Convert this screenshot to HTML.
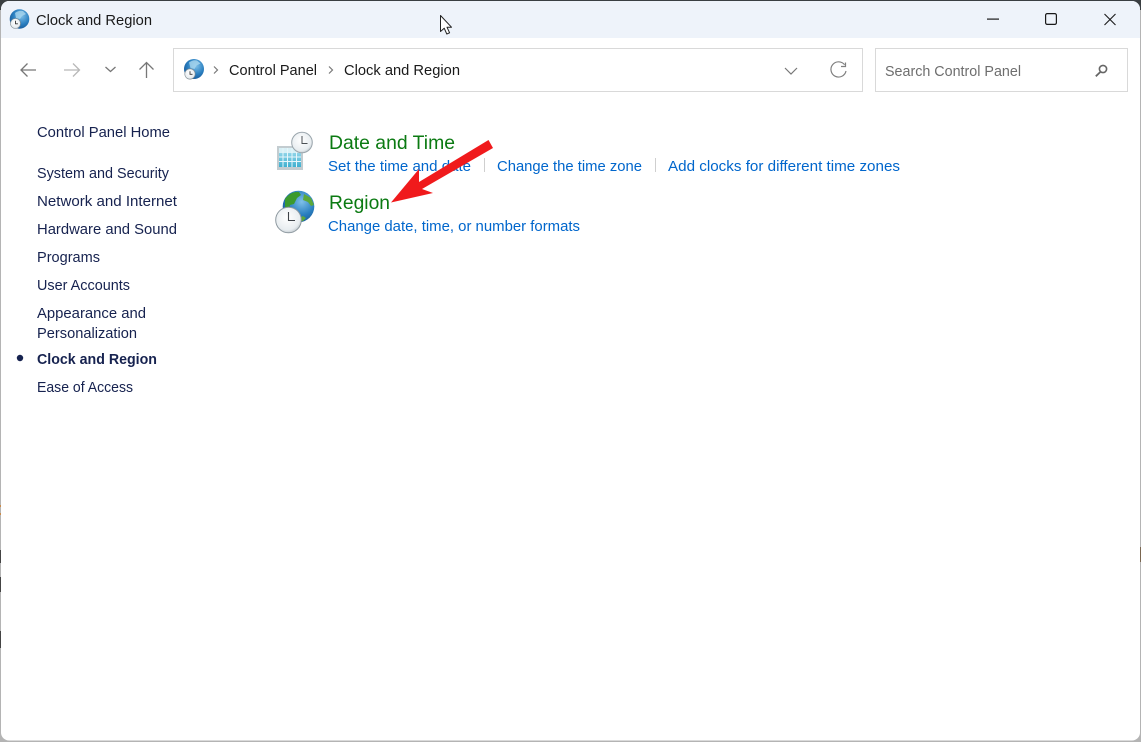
<!DOCTYPE html>
<html>
<head>
<meta charset="utf-8">
<title>Clock and Region</title>
<style>
html,body{margin:0;padding:0;width:1141px;height:742px;overflow:hidden;background:#fff}
svg{display:block}
text{font-family:"Liberation Sans",sans-serif;font-size:14.5px;fill:#1a1a1a}
.nav text{fill:#16224f}
.lnk text{fill:#0066cc}
.head text{fill:#0b7a12;font-size:19.5px}
</style>
</head>
<body>
<svg xmlns="http://www.w3.org/2000/svg" width="1141" height="742" viewBox="0 0 1141 742">
<defs>
<radialGradient id="globe" cx="0.6" cy="0.35" r="0.75">
<stop offset="0" stop-color="#7fc0e8"/><stop offset="0.55" stop-color="#2a7fc0"/><stop offset="1" stop-color="#14508f"/>
</radialGradient>
<radialGradient id="clockface" cx="0.45" cy="0.4" r="0.7">
<stop offset="0" stop-color="#ffffff"/><stop offset="0.7" stop-color="#e8edf0"/><stop offset="1" stop-color="#a9b3ba"/>
</radialGradient>
<linearGradient id="cal" x1="0" y1="0" x2="0" y2="1">
<stop offset="0" stop-color="#8fd4e8"/><stop offset="1" stop-color="#3fb0d0"/>
</linearGradient>
</defs>

<!-- outer frame -->
<rect x="0" y="0" width="1141" height="742" fill="#b4b4b4"/>
<rect x="0" y="0" width="1141" height="10" fill="#3a3f42"/>
<rect x="0" y="1" width="1141" height="9" fill="#b4b4b4" opacity="0"/>
<rect x="1" y="1" width="1139" height="739.5" rx="8" fill="#ffffff"/>
<path d="M1 38V9a8 8 0 0 1 8-8H1132a8 8 0 0 1 8 8V38Z" fill="#eef3fa"/>
<rect x="0" y="505" width="1" height="2" fill="#c98a4a"/>
<rect x="0" y="513" width="1" height="2" fill="#c98a4a"/>
<rect x="0" y="550" width="1" height="13" fill="#444"/>
<rect x="0" y="577" width="1" height="15" fill="#444"/>
<rect x="0" y="631" width="1" height="17" fill="#444"/>
<rect x="1140" y="547" width="1" height="15" fill="#7a6650"/>

<!-- title icon -->
<g>
<circle cx="19.500" cy="19" r="9.800" fill="url(#globe)"/>
<path d="M15 13q4-3 8-2l3 3-4 2-2 3-4-1z" fill="#a9d6ee" opacity=".8"/>
<circle cx="15.500" cy="23.500" r="5" fill="url(#clockface)" stroke="#7f8a90" stroke-width=".6"/>
<path d="M15.500 20.800V23.800H17.900" fill="none" stroke="#333" stroke-width=".9"/>
</g>
<text x="36" y="25" textLength="116" lengthAdjust="spacingAndGlyphs">Clock and Region</text>

<!-- mouse cursor -->
<path d="M440.5 15.5V31.5L444.2 28.2L446.8 34L449.6 32.8L447 27.2H451.5Z" fill="#fff" stroke="#222" stroke-width="1" stroke-linejoin="round"/>

<!-- window controls -->
<rect x="987" y="18.500" width="12" height="1.2" fill="#1a1a1a"/>
<rect x="1045.6" y="13.6" width="10.8" height="10.8" rx="1.6" fill="none" stroke="#1a1a1a" stroke-width="1.2"/>
<path d="M1104.5 14L1115.5 25M1115.5 14L1104.5 25" stroke="#1a1a1a" stroke-width="1.1" fill="none"/>

<!-- nav arrows -->
<path d="M36 70H21M27.5 63.5L21 70L27.5 76.5" fill="none" stroke="#777" stroke-width="1.3"/>
<path d="M64 70H79.5M73 63.5L79.5 70L73 76.5" fill="none" stroke="#b8b8b8" stroke-width="1.3"/>
<path d="M105.5 67L110.500 71.500L115.500 67" fill="none" stroke="#777" stroke-width="1.3"/>
<path d="M146.5 78V63M139.5 69.5L146.5 62.5L153.5 69.5" fill="none" stroke="#777" stroke-width="1.3"/>

<!-- address bar -->
<rect x="173.5" y="48.5" width="689" height="43" fill="#fff" stroke="#d9d9d9"/>
<circle cx="194" cy="69" r="10" fill="url(#globe)"/>
<path d="M189 62.5q4-3 8-2l3.5 3-4 2-2 3.5-4-1z" fill="#a9d6ee" opacity=".8"/>
<circle cx="190" cy="74" r="5.2" fill="url(#clockface)" stroke="#7f8a90" stroke-width=".6"/>
<path d="M190 71.2V74.3H192.5" fill="none" stroke="#333" stroke-width=".9"/>
<path d="M214 66.5L217.5 70L214 73.5" fill="none" stroke="#777" stroke-width="1.2"/>
<text x="229" y="75" textLength="88" lengthAdjust="spacingAndGlyphs">Control Panel</text>
<path d="M329 66.5L332.5 70L329 73.5" fill="none" stroke="#777" stroke-width="1.2"/>
<text x="344" y="75" textLength="116" lengthAdjust="spacingAndGlyphs">Clock and Region</text>
<path d="M785 68L791 74L797 68" fill="none" stroke="#777" stroke-width="1.2"/>
<path d="M844.6 64.800A7.6 7.6 0 1 0 846 71" fill="none" stroke="#808080" stroke-width="1.2"/>
<path d="M845.5 62.500V66.500H841" fill="none" stroke="#808080" stroke-width="1.2"/>

<!-- search -->
<rect x="875.5" y="48.5" width="252" height="43" fill="#fff" stroke="#d9d9d9"/>
<text x="885" y="76" textLength="136" lengthAdjust="spacingAndGlyphs" style="fill:#6e6e6e">Search Control Panel</text>
<circle cx="1103" cy="69" r="3.6" fill="none" stroke="#666" stroke-width="1.6"/>
<path d="M1100.3 72L1095.8 76.3" stroke="#666" stroke-width="1.8" fill="none"/>

<!-- sidebar -->
<g class="nav">
<text x="37" y="137" textLength="133" lengthAdjust="spacingAndGlyphs">Control Panel Home</text>
<text x="37" y="178" textLength="132" lengthAdjust="spacingAndGlyphs">System and Security</text>
<text x="37" y="206" textLength="140" lengthAdjust="spacingAndGlyphs">Network and Internet</text>
<text x="37" y="234" textLength="140" lengthAdjust="spacingAndGlyphs">Hardware and Sound</text>
<text x="37" y="262" textLength="63" lengthAdjust="spacingAndGlyphs">Programs</text>
<text x="37" y="290" textLength="93" lengthAdjust="spacingAndGlyphs">User Accounts</text>
<text x="37" y="318" textLength="109" lengthAdjust="spacingAndGlyphs">Appearance and</text>
<text x="37" y="338" textLength="100" lengthAdjust="spacingAndGlyphs">Personalization</text>
<circle cx="20" cy="358" r="3.2" fill="#16224f"/>
<text x="37" y="364" textLength="120" lengthAdjust="spacingAndGlyphs" style="font-weight:bold">Clock and Region</text>
<text x="37" y="392" textLength="96" lengthAdjust="spacingAndGlyphs">Ease of Access</text>
</g>

<!-- date/time icon -->
<g>
<rect x="277" y="146" width="26" height="24" fill="#c3ccd0"/>
<rect x="279" y="148" width="22" height="5" fill="#d8f0f6"/>
<rect x="279" y="153" width="22" height="14" fill="url(#cal)"/>
<path d="M283 148V167M287.500 148V167M292 148V167M296.500 148V167M279 157H301M279 161.500H301" stroke="#e6f6fb" stroke-width="1" fill="none"/>
<circle cx="302" cy="142.500" r="10.300" fill="url(#clockface)" stroke="#9aa5ac"/>
<path d="M302 136V143.500H307.500" fill="none" stroke="#4a4f54" stroke-width="1"/>
</g>

<!-- region icon -->
<g>
<circle cx="298.500" cy="206.500" r="15.800" fill="url(#globe)"/>
<path d="M285 199q6-8 14-7l2 3-4 3-3 6-4 1-1 5-4-3z" fill="#3c9a2e"/>
<path d="M304 194l7 4 3 7-3 1-3-4-5-2zM298 219l5-3 3 2-3 3-5 1z" fill="#5ca83a"/>
<circle cx="288.500" cy="220" r="12.800" fill="url(#clockface)" stroke="#8e99a0"/>
<path d="M288.500 212V220.500H295" fill="none" stroke="#3e4348" stroke-width="1.100"/>
</g>

<!-- main content -->
<g class="head">
<text x="329" y="149" textLength="126" lengthAdjust="spacingAndGlyphs">Date and Time</text>
<text x="329" y="209" textLength="61" lengthAdjust="spacingAndGlyphs">Region</text>
</g>
<g class="lnk">
<text x="328" y="171" textLength="143" lengthAdjust="spacingAndGlyphs">Set the time and date</text>
<text x="497" y="171" textLength="145" lengthAdjust="spacingAndGlyphs">Change the time zone</text>
<text x="668" y="171" textLength="232" lengthAdjust="spacingAndGlyphs">Add clocks for different time zones</text>
<text x="328" y="231" textLength="252" lengthAdjust="spacingAndGlyphs">Change date, time, or number formats</text>
</g>
<rect x="484" y="158" width="1" height="14" fill="#cfcfcf"/>
<rect x="655" y="158" width="1" height="14" fill="#cfcfcf"/>

<!-- red arrow -->
<path d="M488.500 140L493 148L422 189L433 193L391 202.500L419 169L419 182Z" fill="#f01a1c"/>
</svg>
</body>
</html>
